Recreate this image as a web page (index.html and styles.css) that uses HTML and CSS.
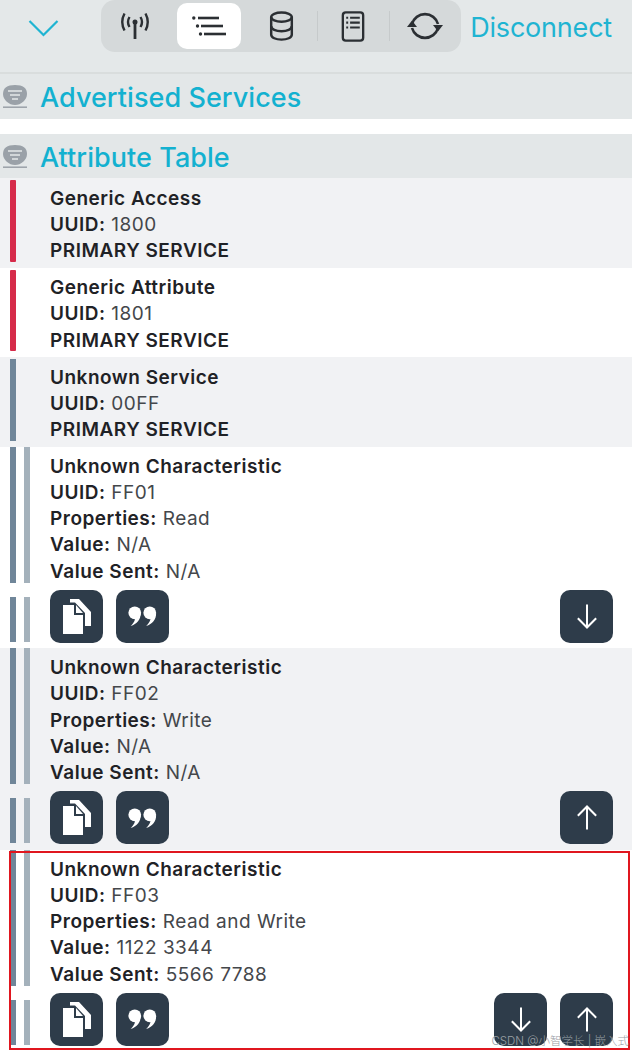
FILE: index.html
```html
<!DOCTYPE html>
<html lang="en">

<head>
    <meta charset="UTF-8">
    <meta name="viewport" content="width=device-width, initial-scale=1.0">
    <title>Attribute Table</title>
    <link rel="stylesheet" href="styles.css">
</head>

<body>
    <header class="topbar">
        <svg class="chevron" width="31" height="18" viewBox="0 0 31 18">
            <path d="M1.500 2 L15.500 16 L29.500 2" fill="none" stroke="#1fb4d2" stroke-width="2.200" />
        </svg>
        <div class="tabs">
            <div class="tab tab-antenna">
                <svg width="32" height="32" viewBox="0 0 32 32" fill="none" stroke="#2b2f33" stroke-width="2.400">
                    <path d="M16 13 V29" stroke-width="2.800" />
                    <circle cx="16" cy="12" r="2.500" fill="#2b2f33" stroke="none" />
                    <path d="M10.500 7 Q7.500 12 10.500 17" />
                    <path d="M21.500 7 Q24.500 12 21.500 17" />
                    <path d="M5.500 3.500 Q1 12 5.500 20.500" />
                    <path d="M26.500 3.500 Q31 12 26.500 20.500" />
                </svg>
            </div>
            <div class="tab tab-active">
                <svg width="34" height="20" viewBox="0 0 34 20" fill="#2b2f33">
                    <circle cx="1.800" cy="2" r="1.700" />
                    <rect x="6" y="0.700" width="21" height="2.600" />
                    <circle cx="5.500" cy="10" r="1.700" />
                    <rect x="9" y="8.700" width="22" height="2.600" />
                    <circle cx="8.500" cy="18" r="1.700" />
                    <rect x="12" y="16.700" width="22" height="2.600" />
                </svg>
            </div>
            <div class="tab">
                <svg width="25" height="30" viewBox="0 0 26 32" fill="none" stroke="#2b2f33" stroke-width="2.600">
                    <ellipse cx="13" cy="6.500" rx="11" ry="5" />
                    <path d="M2 6.500 V25 C2 28.500 7 30.500 13 30.500 C19 30.500 24 28.500 24 25 V6.500" />
                    <path d="M2 16 C2 19.500 7 21.500 13 21.500 C19 21.500 24 19.500 24 16" />
                </svg>
            </div>
            <div class="tab-divider"></div>
            <div class="tab">
                <svg width="24" height="31" viewBox="0 0 24 32" fill="none" stroke="#2b2f33">
                    <rect x="1.500" y="1.500" width="21" height="29" rx="3" stroke-width="2.400" />
                    <path d="M9 7 H19 M9 12 H19 M9 17 H19" stroke-width="2.200" />
                    <path d="M5 7 H7 M5 12 H7 M5 17 H7" stroke-width="2.200" />
                </svg>
            </div>
            <div class="tab-divider"></div>
            <div class="tab">
                <svg width="36" height="32" viewBox="0 0 36 32" fill="none" stroke="#2b2f33" stroke-width="2.600">
                    <path d="M5 14 A13.500 13.500 0 0 1 31 14" />
                    <path d="M31 18 A13.500 13.500 0 0 1 5 18" />
                    <path d="M0 17 L5 10.500 L10 17 Z" fill="#2b2f33" stroke="none" />
                    <path d="M26 15 L31 21.500 L36 15 Z" fill="#2b2f33" stroke="none" />
                </svg>
            </div>
        </div>
        <span class="disconnect">Disconnect</span>
    </header>

    <section class="section-head section-first">
        <svg class="section-icon" width="24" height="23" viewBox="0 0 24 23"><use href="#icon-service" /></svg>
        <h2>Advertised Services</h2>
    </section>

    <section class="section-head">
        <svg class="section-icon" width="24" height="23" viewBox="0 0 24 23"><use href="#icon-service" /></svg>
        <h2>Attribute Table</h2>
    </section>

    <div class="row row-alt service">
        <div class="bar bar-red"></div>
        <div class="info">
            <p class="name">Generic Access</p>
            <p><b>UUID:</b> 1800</p>
            <p><b>PRIMARY SERVICE</b></p>
        </div>
    </div>
    <div class="row service">
        <div class="bar bar-red"></div>
        <div class="info">
            <p class="name">Generic Attribute</p>
            <p><b>UUID:</b> 1801</p>
            <p><b>PRIMARY SERVICE</b></p>
        </div>
    </div>
    <div class="row row-alt service">
        <div class="bar bar-slate"></div>
        <div class="info">
            <p class="name">Unknown Service</p>
            <p><b>UUID:</b> 00FF</p>
            <p><b>PRIMARY SERVICE</b></p>
        </div>
    </div>

    <div class="char">
        <div class="row char-top">
            <div class="bar bar-slate"></div>
            <div class="bar bar-light"></div>
            <div class="info">
                <p class="name">Unknown Characteristic</p>
                <p><b>UUID:</b> FF01</p>
                <p><b>Properties:</b> Read</p>
                <p><b>Value:</b> N/A</p>
                <p><b>Value Sent:</b> N/A</p>
            </div>
        </div>
        <div class="row char-actions">
            <div class="bar bar-slate"></div>
            <div class="bar bar-light"></div>
            <div class="btn">
                <svg width="28" height="35" viewBox="0 0 28 35"><use href="#icon-copy" /></svg>
            </div>
            <div class="btn">
                <svg width="31" height="20" viewBox="0 0 32 22"><use href="#icon-quote" /></svg>
            </div>
            <div class="btn btn-push">
                <svg width="22" height="27" viewBox="0 0 24 28"><use href="#icon-down" /></svg>
            </div>
        </div>
    </div>

    <div class="char row-alt">
        <div class="row char-top">
            <div class="bar bar-slate"></div>
            <div class="bar bar-light"></div>
            <div class="info">
                <p class="name">Unknown Characteristic</p>
                <p><b>UUID:</b> FF02</p>
                <p><b>Properties:</b> Write</p>
                <p><b>Value:</b> N/A</p>
                <p><b>Value Sent:</b> N/A</p>
            </div>
        </div>
        <div class="row char-actions">
            <div class="bar bar-slate"></div>
            <div class="bar bar-light"></div>
            <div class="btn">
                <svg width="28" height="35" viewBox="0 0 28 35"><use href="#icon-copy" /></svg>
            </div>
            <div class="btn">
                <svg width="31" height="20" viewBox="0 0 32 22"><use href="#icon-quote" /></svg>
            </div>
            <div class="btn btn-push">
                <svg width="22" height="27" viewBox="0 0 24 28"><use href="#icon-up" /></svg>
            </div>
        </div>
    </div>

    <div class="char char-marked">
        <div class="row char-top">
            <div class="bar bar-slate"></div>
            <div class="bar bar-light"></div>
            <div class="info">
                <p class="name">Unknown Characteristic</p>
                <p><b>UUID:</b> FF03</p>
                <p><b>Properties:</b> Read and Write</p>
                <p><b>Value:</b> 1122 3344</p>
                <p><b>Value Sent:</b> 5566 7788</p>
            </div>
        </div>
        <div class="row char-actions">
            <div class="bar bar-slate"></div>
            <div class="bar bar-light"></div>
            <div class="btn">
                <svg width="28" height="35" viewBox="0 0 28 35"><use href="#icon-copy" /></svg>
            </div>
            <div class="btn">
                <svg width="31" height="20" viewBox="0 0 32 22"><use href="#icon-quote" /></svg>
            </div>
            <div class="btn btn-push">
                <svg width="22" height="27" viewBox="0 0 24 28"><use href="#icon-down" /></svg>
            </div>
            <div class="btn">
                <svg width="22" height="27" viewBox="0 0 24 28"><use href="#icon-up" /></svg>
            </div>
        </div>
    </div>

    <span class="credit">CSDN @小智学长 | 嵌入式</span>

    <svg class="icon-defs" width="0" height="0">
        <symbol id="icon-service" viewBox="0 0 24 23">
            <path d="M12 0 C20 0 24 3 24 9 C24 15 18 20 12 20 C6 20 0 15 0 9 C0 3 4 0 12 0 Z" fill="#9aa1a8" />
            <path d="M5 6 H19 M7 10 H17 M9 14 H15" stroke="#e3e7e8" stroke-width="1.600" />
            <path d="M0 22.200 H24" stroke="#9aa1a8" stroke-width="1.500" />
        </symbol>
        <symbol id="icon-copy" viewBox="0 0 28 35">
            <path d="M0 6 H11 V16 H20 V35 H0 Z" fill="#fff" />
            <path d="M13 6 L20 14 H13 Z" fill="#fff" />
            <path d="M7 0 H16 L28 13 V27 H22 V14 L12 3.500 H7 Z" fill="#fff" />
        </symbol>
        <symbol id="icon-quote" viewBox="0 0 32 22">
            <circle cx="7.500" cy="7.500" r="7" fill="#fff" />
            <path d="M14 8 C14 15 10 20 3 22 C7 18 8 15 8 12 Z" fill="#fff" />
            <circle cx="24" cy="7.500" r="7" fill="#fff" />
            <path d="M31 8 C31 15 27 20 20 22 C24 18 25 15 25 12 Z" fill="#fff" />
        </symbol>
        <symbol id="icon-down" viewBox="0 0 24 28">
            <path d="M12 1 V26 M2 16 L12 26 L22 16" fill="none" stroke="#fff" stroke-width="2.200" />
        </symbol>
        <symbol id="icon-up" viewBox="0 0 24 28">
            <path d="M12 27 V2 M2 12 L12 2 L22 12" fill="none" stroke="#fff" stroke-width="2.200" />
        </symbol>
    </svg>
</body>

</html>
```

FILE: styles.css
```css
* {
    box-sizing: border-box;
}

body {
    margin: 0;
    font-family: Inter, "Liberation Sans", "Noto Sans CJK SC", sans-serif;
    color: #33363a;
    background-color: #fff;
    position: relative;
    height: 1052px;
    overflow: hidden;
}

p,
h2 {
    margin: 0;
}

.topbar {
    display: flex;
    align-items: center;
    height: 74px;
    padding: 0 20px 20px 28px;
    background-color: #e4e8e9;
    border-bottom: 2px solid #d9dddd;
}

.chevron {
    flex: none;
    margin-top: 4px;
}

.tabs {
    display: flex;
    align-items: center;
    flex: none;
    width: 360px;
    height: 52px;
    margin-left: 42px;
    padding: 0 4px;
    border-radius: 14px;
    background-color: #d5d9da;
}

.tab {
    display: flex;
    align-items: center;
    justify-content: center;
    width: 64px;
    height: 46px;
    margin-right: 8px;
    flex: none;
}

.tab:last-child {
    margin-right: 0;
}

.tab-antenna {
    margin-left: -2px;
    margin-right: 10px;
}

.tab-active {
    background-color: #fff;
    border-radius: 10px;
}

.tab-divider {
    flex: none;
    width: 1px;
    height: 30px;
    margin: 0 3.500px 0 -4.500px;
    background-color: #c6cacb;
}

.disconnect {
    margin-left: auto;
    margin-top: 3px;
    font-size: 27px;
    color: #1fb4d2;
    letter-spacing: -0.200px;
}

.section-head {
    display: flex;
    align-items: center;
    gap: 13px;
    height: 44px;
    padding-left: 3px;
    background-color: #e3e7e8;
}

.section-first {
    height: 45px;
    margin-bottom: 15px;
}

.section-head h2 {
    padding-top: 2px;
    font-size: 27px;
    font-weight: 500;
    color: #13b1d0;
    letter-spacing: 0.050px;
}

.row {
    display: flex;
    padding-left: 10px;
}

.row-alt {
    background-color: #f1f2f4;
}

.service {
    height: 89.500px;
    padding-top: 2px;
    padding-bottom: 6px;
}

.bar {
    flex: none;
    width: 6px;
    margin-right: 8px;
}

.bar-red {
    background-color: #d62b4a;
    border-radius: 1px;
}

.bar-slate {
    background-color: #708699;
}

.bar-light {
    background-color: #a4b1bb;
}

.info {
    padding-left: 26px;
    padding-top: 5.500px;
    font-size: 19px;
    line-height: 26.300px;
    letter-spacing: 0.500px;
    color: #44474b;
}

.char-top .info {
    padding-left: 12px;
    padding-top: 7px;
}

.info b,
.name {
    font-weight: 600;
    color: #1f2226;
}

.char {
    height: 201.500px;
}

.char-top {
    height: 136px;
}

.char-actions {
    align-items: stretch;
    height: 59px;
    padding-top: 14px;
    padding-right: 19px;
}

.btn {
    display: flex;
    align-items: center;
    justify-content: center;
    width: 53px;
    height: 53px;
    margin-top: -7px;
    margin-right: 13px;
    border-radius: 10px;
    background-color: #2e3c4a;
}

.char-actions .bar+.bar+.btn {
    margin-left: 12px;
}

.char-actions .btn:last-child {
    margin-right: 0;
}

.btn-push {
    margin-left: auto;
}

.char-marked {
    position: relative;
}

.char-marked::after {
    content: "";
    position: absolute;
    left: 9px;
    right: 2px;
    top: 1px;
    bottom: 1px;
    border: 2px solid #e0161f;
}

.credit {
    position: absolute;
    right: 3px;
    bottom: 4px;
    font-size: 11.500px;
    font-weight: 300;
    color: #9aa0a5;
}

.icon-defs {
    position: absolute;
}
```
